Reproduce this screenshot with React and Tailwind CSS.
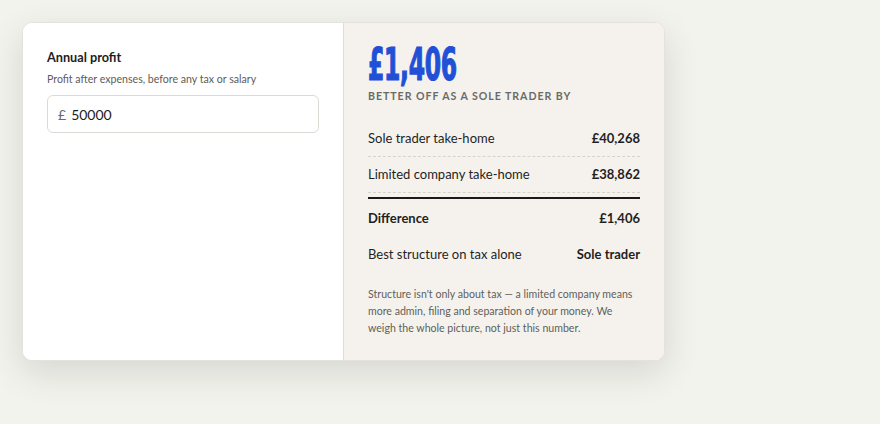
import React, { useState } from "react";

const rows = [
  { label: "Sole trader take-home", value: "£40,268" },
  { label: "Limited company take-home", value: "£38,862" },
];

export default function App() {
  const [profit, setProfit] = useState("50000");

  return (
    <div className="min-h-screen w-full bg-[#f3f3ee] pt-[22px] pl-[22px]" style={{ fontFamily: "Lato, 'Noto Sans', sans-serif" }}>
      <div className="flex w-[643px] h-[339px] rounded-[10px] overflow-hidden bg-white border border-[#e4e2dc] shadow-[0_12px_36px_rgba(0,0,0,0.12)]">
        {/* input side */}
        <div className="w-[320px] shrink-0 bg-white px-6 pt-[25px]">
          <div className="text-[12.7px] font-bold text-[#1c1c1c] leading-[18px]">Annual profit</div>
          <div className="text-[10.6px] text-[#5c5c5c] mt-[6px] leading-[14px]">Profit after expenses, before any tax or salary</div>
          <label className="mt-[9px] flex items-center h-[38px] w-[272px] rounded-[6px] border border-[#dcdad4] bg-white px-[10px] gap-[5px]">
            <span className="text-[14px] text-[#6b6b6b]">£</span>
            <input
              value={profit}
              onChange={(e) => setProfit(e.target.value)}
              className="flex-1 min-w-0 bg-transparent outline-none text-[14px] text-[#1c1c1c]"
            />
          </label>
        </div>

        {/* result side */}
        <div className="flex-1 bg-[#f5f2ed] border-l border-[#e0ddd6] px-6 pt-[22px]">
          <div className="h-[40px]">
            <div
              className="inline-block origin-left scale-x-[0.58] text-[45px] font-bold leading-[40px] text-[#2150d6] tracking-[-0.5px] [-webkit-text-stroke:1.2px_#2150d6]"
              style={{ fontFamily: "'DejaVu Sans Condensed', 'DejaVu Sans', sans-serif" }}
            >
              £1,406
            </div>
          </div>
          <div className="mt-[4px] text-[10.6px] font-bold tracking-[0.09em] text-[#6a6a66] leading-[14px]">
            BETTER OFF AS A SOLE TRADER BY
          </div>

          <div className="mt-[18px] text-[13px] text-[#1f1f1f]">
            {rows.map((r) => (
              <div key={r.label} className="flex justify-between items-center h-[36px] border-b border-dashed border-[#d6d3cc]">
                <span>{r.label}</span>
                <span className="font-bold">{r.value}</span>
              </div>
            ))}
            <div className="mt-[4px] border-t-2 border-[#1a1a1a]" />
            <div className="flex justify-between items-center h-[40px] font-bold">
              <span>Difference</span>
              <span>£1,406</span>
            </div>
            <div className="flex justify-between items-center h-[32px]">
              <span>Best structure on tax alone</span>
              <span className="font-bold">Sole trader</span>
            </div>
          </div>

          <p className="mt-[15px] text-[10.6px] leading-[17px] text-[#5f5f5b]">
            Structure isn't only about tax — a limited company means more admin, filing and separation of your money. We weigh the whole picture, not just this number.
          </p>
        </div>
      </div>
    </div>
  );
}
